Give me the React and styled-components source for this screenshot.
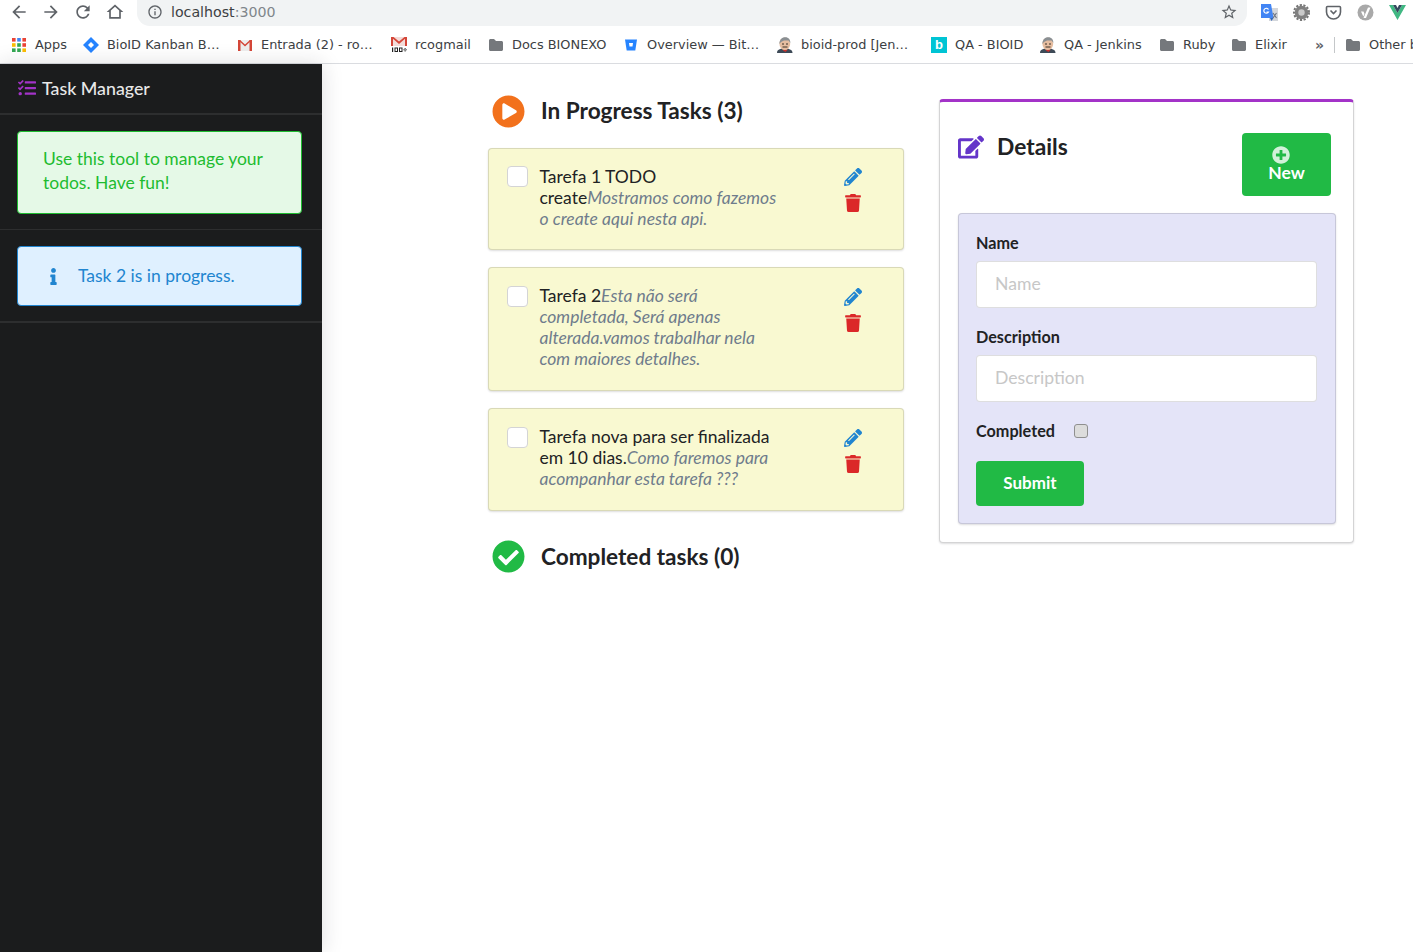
import React from 'react'
import styled, { createGlobalStyle } from 'styled-components'
import { FaTasks, FaPlayCircle, FaCheckCircle, FaPencilAlt, FaTrash, FaEdit, FaPlusCircle, FaInfo } from 'react-icons/fa'

const GlobalStyle = createGlobalStyle`
  html, body {
    margin: 0;
    padding: 0;
    background: #fff;
  }
  * {
    box-sizing: border-box;
  }
`;

const Page = styled.div`
  width: 1413px;
  height: 952px;
  overflow: hidden;
  display: flex;
  flex-direction: column;
  font-family: Lato, "Liberation Sans", sans-serif;
  color: #212224;
`;

const Toolbar = styled.div`
  height: 26px;
  flex: none;
  display: flex;
  padding-left: 3px;
`;

const NavButton = styled.div`
  width: 32px;
  height: 24px;
  display: flex;
  align-items: center;
  justify-content: center;
  svg {
    width: 20px;
    height: 20px;
    fill: #5f6368;
  }
`;

const Omnibox = styled.div`
  width: 1110px;
  margin-left: 6px;
  height: 26px;
  background: #f1f3f4;
  border-radius: 0 0 13px 13px;
  display: flex;
  align-items: center;
  padding: 0 8px 2px 10px;
  font: 14.2px "DejaVu Sans", sans-serif;
  color: #80868b;
  svg {
    width: 16px;
    height: 16px;
    fill: #5f6368;
  }
`;

const Host = styled.span`
  margin-left: 8px;
  color: #3c4043;
`;

const Star = styled.div`
  margin-left: auto;
  margin-right: 1px;
  display: flex;
  svg {
    width: 18px;
    height: 18px;
  }
`;

const Extensions = styled.div`
  margin-left: 6px;
  display: flex;
`;

const ExtButton = styled.div`
  width: 32px;
  height: 24px;
  display: flex;
  align-items: center;
  justify-content: center;
  svg {
    width: 17px;
    height: 17px;
  }
`;

const BookmarksBar = styled.div`
  height: 38px;
  flex: none;
  display: flex;
  align-items: center;
  padding: 0 0 0 11px;
  border-bottom: 1px solid #dadce0;
  font: 12.9px "DejaVu Sans", sans-serif;
  color: #3c4043;
  white-space: nowrap;
  overflow: hidden;
`;

const Bookmark = styled.div`
  flex: none;
  width: ${(p) => p.$width}px;
  display: flex;
  align-items: center;
  gap: 8px;
  svg {
    width: 16px;
    height: 16px;
    flex: none;
  }
`;

const Chevrons = styled.div`
  flex: none;
  width: 19px;
  margin-left: 14px;
  font-size: 14px;
  font-weight: 700;
  color: #5f6368;
`;

const BarDivider = styled.div`
  flex: none;
  width: 1px;
  height: 16px;
  background: #c4c7c9;
  margin-right: 10px;
`;

const Body = styled.div`
  flex: 1;
  display: flex;
  min-height: 0;
`;

const Sidebar = styled.aside`
  width: 322px;
  flex: none;
  background: #1b1c1d;
  box-shadow: 0 0 20px rgba(34, 36, 38, 0.15);
`;

const SidebarHeader = styled.div`
  height: 51px;
  display: flex;
  align-items: center;
  padding: 0 0 2px 18px;
  border-bottom: 2px solid #2d2e2f;
  font-size: 17.8px;
  font-weight: 500;
  color: #e8e8e8;
  svg {
    width: 18px;
    height: 18px;
    color: #a333c8;
    margin-right: 6px;
  }
`;

const SidebarItem = styled.div`
  padding: 16px 20px 15px 17px;
  border-bottom: ${(p) => (p.$thick ? 2 : 1)}px solid #2d2e2f;
`;

const Message = styled.div`
  width: 285px;
  border-radius: 4px;
  font-size: 17.5px;
  line-height: 24px;
  display: flex;
  align-items: center;
  background: ${(p) => (p.$tone === 'info' ? '#dff0ff' : '#e5f9e7')};
  color: ${(p) => (p.$tone === 'info' ? '#2185d0' : '#1ebc30')};
  border: 1px solid ${(p) => (p.$tone === 'info' ? '#2185d0' : '#1ebc30')};
  padding: ${(p) => (p.$tone === 'info' ? '17px 25px' : '15px 25px 18px')};
`;

const MessageIcon = styled(FaInfo)`
  width: 21px;
  height: 17px;
  margin-right: 14px;
  flex: none;
`;

const Content = styled.main`
  flex: 1;
  display: grid;
  grid-template-columns: 416px 415px;
  column-gap: 35px;
  align-items: start;
  padding: 35px 0 0 166px;
`;

const TaskColumn = styled.section`
  display: flex;
  flex-direction: column;
`;

const SectionTitle = styled.h2`
  margin: 0;
  display: flex;
  align-items: center;
  height: 24px;
  padding-left: 4px;
  font-size: 22.6px;
  font-weight: 700;
  line-height: 24px;
  svg {
    width: 33px;
    height: 33px;
    margin-right: 16px;
    color: ${(p) => p.$iconColor};
    flex: none;
  }
`;

const TaskList = styled.div`
  margin: 24.6px 0 33.800px;
  display: flex;
  flex-direction: column;
  gap: 17px;
`;

const TaskCard = styled.div`
  display: flex;
  align-items: flex-start;
  padding: 18px 18px 19.750px 18px;
  background: #f9f9d1;
  border: 1px solid rgba(34, 36, 38, 0.15);
  border-radius: 4px;
  box-shadow: 0 1px 2px rgba(34, 36, 38, 0.15);
`;

const TaskCheck = styled.div`
  width: 21px;
  height: 21px;
  margin-top: -0.5px;
  flex: none;
  background: #fff;
  border: 1px solid #d4d4d5;
  border-radius: 4px;
`;

const TaskText = styled.div`
  width: 242px;
  margin: -1px 0 1px 11.5px;
  font-size: 17.5px;
  line-height: 21px;
`;

const TaskNote = styled.em`
  color: #6f7c8c;
`;

const TaskActions = styled.div`
  margin-left: 62.5px;
  padding-top: 1.5px;
  display: flex;
  flex-direction: column;
  align-items: center;
  gap: 8px;
`;

const EditIcon = styled(FaPencilAlt)`
  width: 18px;
  height: 18px;
  color: #2185d0;
`;

const TrashIcon = styled(FaTrash)`
  width: 16px;
  height: 18px;
  color: #db2828;
`;

const DetailsPanel = styled.section`
  height: 444px;
  padding: 31px 17px 0 18px;
  background: #fff;
  border: 1px solid #d4d4d5;
  border-top: 3px solid #a333c8;
  border-radius: 4px;
  box-shadow: 0 1px 2px rgba(34, 36, 38, 0.15);
`;

const DetailsHeader = styled.div`
  display: flex;
  justify-content: space-between;
  padding-right: 5px;
`;

const DetailsTitle = styled.h2`
  margin: 1px 0 0;
  display: flex;
  align-items: flex-start;
  font-size: 22.8px;
  font-weight: 700;
  line-height: 24px;
  svg {
    width: 26px;
    height: 26px;
    margin-right: 13px;
    color: #6435c9;
  }
`;

const NewButton = styled.button`
  width: 89px;
  height: 63px;
  padding: 0 0 1px;
  display: flex;
  flex-direction: column;
  align-items: center;
  justify-content: center;
  border: none;
  border-radius: 4px;
  background: #21ba45;
  color: #fff;
  font: 700 17.5px/18px Lato, sans-serif;
  svg {
    width: 18px;
    height: 18px;
    margin-right: 12px;
    opacity: 0.8;
  }
`;

const TaskForm = styled.form`
  margin-top: 17px;
  width: 378px;
  height: 311px;
  padding: 20px 17px 0;
  background: #e4e4f8;
  border: 1px solid rgba(34, 36, 38, 0.15);
  border-radius: 4px;
  box-shadow: 0 1px 2px rgba(34, 36, 38, 0.15);
`;

const FieldLabel = styled.label`
  display: block;
  font-size: 16.2px;
  font-weight: 700;
  line-height: 18px;
`;

const TextInput = styled.input`
  display: block;
  width: 341px;
  height: 47px;
  margin: 9px 0 20px;
  padding: 0 18px 2px;
  background: #fff;
  border: 1px solid rgba(34, 36, 38, 0.15);
  border-radius: 4px;
  outline: none;
  font: 17.6px Lato, sans-serif;
  &::placeholder {
    color: #c7c7c7;
    opacity: 1;
  }
`;

const CompletedRow = styled.div`
  display: flex;
  align-items: center;
  gap: 19px;
  height: 18px;
`;

const NativeBox = styled.div`
  width: 14px;
  height: 14px;
  background: #dcdcdc;
  border: 1px solid #8f8f8f;
  border-radius: 3px;
`;

const SubmitButton = styled.button`
  display: block;
  width: 108px;
  height: 45px;
  margin-top: 21px;
  padding: 0 0 2px;
  border: none;
  border-radius: 4px;
  background: #21ba45;
  color: #fff;
  font: 700 17px Lato, sans-serif;
`;

const Mat = ({ d }) => (
  <svg viewBox="0 0 24 24">
    <path d={d} />
  </svg>
);

const Folder = () => (
  <svg viewBox="0 0 16 16">
    <path d="M1 3.500C1 2.700 1.700 2 2.500 2H6l2 2h5.500c.8 0 1.500.7 1.500 1.500v7c0 .8-.7 1.500-1.500 1.500h-11C1.700 14 1 13.300 1 12.500z" fill="#75787c" />
  </svg>
);

const AppsGrid = () => {
  const colors = ['#ea4335', '#4285f4', '#ea4335', '#fbbc04', '#34a853', '#ea4335', '#34a853', '#34a853', '#fbbc04']
  return (
    <svg viewBox="0 0 16 16">
      {colors.map((c, i) => (
        <rect key={i} x={1 + (i % 3) * 5.2} y={1 + Math.floor(i / 3) * 5.2} width="3.600" height="3.600" fill={c} />
      ))}
    </svg>
  )
};

const JiraIcon = () => (
  <svg viewBox="0 0 16 16">
    <path d="M8 0l8 8-8 8-8-8z" fill="#2684ff" />
    <path d="M8 5l3 3-3 3-3-3z" fill="#fff" />
  </svg>
);

const GmailIcon = () => (
  <svg viewBox="0 0 16 16">
    <path d="M1 3h14v11H1z" fill="#eee" />
    <path d="M1 3h2.500v11H1zM12.500 3H15v11h-2.500z" fill="#d44638" />
    <path d="M1 3h2l5 4.500L13 3h2L8 9.500z" fill="#d44638" />
  </svg>
);

const Gmail100Icon = () => (
  <svg viewBox="0 0 16 16">
    <path d="M0 0h16v9H0z" fill="#f3dcd9" />
    <path d="M0 0h2v9H0zM14 0h2v9h-2z" fill="#d44638" />
    <path d="M0 0h2.500L8 4.500 13.500 0H16L8 7z" fill="#d44638" />
    <path d="M1 10.500h1.200V15H1zM3.500 10.500h3.500V15H3.500zM4.500 11.500v2.500h1.500v-2.500zM8 10.500h3.500V15H8zM9 11.500v2.500h1.500v-2.500zM12.500 12.300h3.200v1h-3.200zM13.600 11h1v3.600h-1z" fill="#222" fillRule="evenodd" />
  </svg>
);

const BitbucketIcon = () => (
  <svg viewBox="0 0 16 16">
    <path d="M2 2.500h12L12.300 13.500H3.700z" fill="#2684ff" />
    <path d="M6 6h4l-.5 3.500h-3z" fill="#fff" />
  </svg>
);

const JenkinsIcon = () => (
  <svg viewBox="0 0 16 16">
    <path d="M0 16c0-3 2-4.500 7.500-4.500S15.500 13 15.500 16z" fill="#3d4a57" />
    <path d="M6.500 11.500h2.500l1.500 1.500-2 2-2.500-1.500z" fill="#c8322d" />
    <ellipse cx="7.800" cy="6.800" rx="5.400" ry="6.300" fill="#e6bda0" />
    <path d="M2.400 7C2.400 2 5.500 .2 8.500 .2S13.400 2.500 13.400 6L11.500 3.500H7L4 5z" fill="#8a8f93" />
    <path d="M5 7h2M9 7h2M5.500 10h5" stroke="#3b3027" strokeWidth="1" />
  </svg>
);

const BrandB = styled.div`
  width: 16px;
  height: 16px;
  flex: none;
  background: #00c4d4;
  color: #fff;
  font: 700 13px/16px "Liberation Sans", sans-serif;
  text-align: center;
`;

const bookmarks = [
  { label: 'Apps', width: 72, icon: <AppsGrid /> },
  { label: 'BioID Kanban B…', width: 154, icon: <JiraIcon /> },
  { label: 'Entrada (2) - ro…', width: 154, icon: <GmailIcon /> },
  { label: 'rcogmail', width: 97, icon: <Gmail100Icon /> },
  { label: 'Docs BIONEXO', width: 135, icon: <Folder /> },
  { label: 'Overview — Bit…', width: 154, icon: <BitbucketIcon /> },
  { label: 'bioid-prod [Jen…', width: 154, icon: <JenkinsIcon /> },
  { label: 'QA - BIOID', width: 109, icon: <BrandB>b</BrandB> },
  { label: 'QA - Jenkins', width: 119, icon: <JenkinsIcon /> },
  { label: 'Ruby', width: 72, icon: <Folder /> },
  { label: 'Elixir', width: 70, icon: <Folder /> },
]

const tasks = [
  { id: 1, name: 'Tarefa 1 TODO create', note: 'Mostramos como fazemos o create aqui nesta api.' },
  { id: 2, name: 'Tarefa 2', note: 'Esta não será completada, Será apenas alterada.vamos trabalhar nela com maiores detalhes.' },
  { id: 3, name: 'Tarefa nova para ser finalizada em 10 dias.', note: 'Como faremos para acompanhar esta tarefa ???' },
]

const BrowserChrome = () => (
  <>
    <Toolbar>
      <NavButton><Mat d="M20 11H7.830l5.590-5.590L12 4l-8 8 8 8 1.410-1.410L7.830 13H20v-2z" /></NavButton>
      <NavButton><Mat d="M4 11h12.170l-5.590-5.590L12 4l8 8-8 8-1.410-1.410L16.170 13H4v-2z" /></NavButton>
      <NavButton><Mat d="M17.650 6.350C16.200 4.900 14.210 4 12 4c-4.420 0-7.990 3.580-7.990 8s3.570 8 7.990 8c3.730 0 6.840-2.550 7.730-6h-2.080c-.82 2.330-3.040 4-5.650 4-3.310 0-6-2.690-6-6s2.690-6 6-6c1.660 0 3.140.69 4.220 1.780L13 11h7V4l-2.350 2.350z" /></NavButton>
      <NavButton><Mat d="M12 5.690l5 4.500V18H7v-7.810l5-4.500M12 3L2 12h3v8h14v-8h3L12 3z" /></NavButton>
      <Omnibox>
        <Mat d="M11 7h2v2h-2zm0 4h2v6h-2zm1-9C6.480 2 2 6.480 2 12s4.480 10 10 10 10-4.480 10-10S17.520 2 12 2zm0 18c-4.410 0-8-3.590-8-8s3.590-8 8-8 8 3.590 8 8-3.590 8-8 8z" />
        <Host>localhost</Host>:3000
        <Star>
          <Mat d="M22 9.240l-7.190-.62L12 2 9.190 8.630 2 9.240l5.460 4.730L5.820 21 12 17.270 18.180 21l-1.630-7.030L22 9.240zM12 15.400l-3.760 2.270 1-4.280-3.320-2.880 4.380-.38L12 6.100l1.710 4.040 4.380.38-3.320 2.880 1 4.280L12 15.400z" />
        </Star>
      </Omnibox>
      <Extensions>
        <ExtButton>
          <svg viewBox="0 0 17 17">
            <path d="M8 4h9v13H8z" fill="#d3d6db" />
            <path d="M0 0h10l2.500 14H0z" fill="#4285f4" />
            <path d="M9 14h3.500l-2 3z" fill="#3367b8" />
            <path d="M7.500 5.500a2.500 2.500 0 1 0 0 2.500H5.500" fill="none" stroke="#fff" strokeWidth="1.200" />
            <path d="M12 9l3.500 5M15.500 9L12 14" stroke="#6b7280" strokeWidth="1.100" />
          </svg>
        </ExtButton>
        <ExtButton>
          <svg viewBox="0 0 17 17">
            <circle cx="8.500" cy="8.500" r="6.800" fill="#808080" />
            <circle cx="8.500" cy="8.500" r="7.500" fill="none" stroke="#777" strokeWidth="2" strokeDasharray="2.200 1.500" />
            <circle cx="8.500" cy="8.500" r="3.200" fill="#c9c9c9" />
          </svg>
        </ExtButton>
        <ExtButton>
          <svg viewBox="0 0 17 17">
            <path d="M2.500 2.500h12c.6 0 1 .4 1 1v4.500a7 7 0 0 1-14 0V3.500c0-.6.4-1 1-1z" fill="none" stroke="#5f6368" strokeWidth="1.600" />
            <path d="M5.500 6.500l3 3 3-3" fill="none" stroke="#5f6368" strokeWidth="1.600" />
          </svg>
        </ExtButton>
        <ExtButton>
          <svg viewBox="0 0 17 17">
            <circle cx="8.500" cy="8.500" r="8" fill="#a9a9a9" />
            <path d="M6.500 14L11 3.500h2.500L9 14zM4 7.500h2.500L7.500 10 6.300 12.500z" fill="#fff" />
          </svg>
        </ExtButton>
        <ExtButton>
          <svg viewBox="0 0 17 17">
            <path d="M0 1h4l4.500 8L13 1h4L8.500 16z" fill="#41b883" />
            <path d="M4 1h3l1.500 3L10 1h3L8.500 9z" fill="#35495e" />
          </svg>
        </ExtButton>
      </Extensions>
    </Toolbar>
    <BookmarksBar>
      {bookmarks.map((b) => (
        <Bookmark key={b.label} $width={b.width}>
          {b.icon}
          {b.label}
        </Bookmark>
      ))}
      <Chevrons>»</Chevrons>
      <BarDivider />
      <Bookmark $width={100}>
        <Folder />
        Other bookmarks
      </Bookmark>
    </BookmarksBar>
  </>
)

const App = () => {
  return (
    <Page>
      <GlobalStyle />
      <BrowserChrome />
      <Body>
        <Sidebar>
          <SidebarHeader>
            <FaTasks />
            Task Manager
          </SidebarHeader>
          <SidebarItem>
            <Message>Use this tool to manage your todos. Have fun!</Message>
          </SidebarItem>
          <SidebarItem $thick>
            <Message $tone="info">
              <MessageIcon />
              Task 2 is in progress.
            </Message>
          </SidebarItem>
        </Sidebar>
        <Content>
          <TaskColumn>
            <SectionTitle $iconColor="#f2711c">
              <FaPlayCircle />
              In Progress Tasks (3)
            </SectionTitle>
            <TaskList>
              {tasks.map((t) => (
                <TaskCard key={t.id}>
                  <TaskCheck />
                  <TaskText>
                    {t.name}
                    <TaskNote>{t.note}</TaskNote>
                  </TaskText>
                  <TaskActions>
                    <EditIcon />
                    <TrashIcon />
                  </TaskActions>
                </TaskCard>
              ))}
            </TaskList>
            <SectionTitle $iconColor="#21ba45">
              <FaCheckCircle />
              Completed tasks (0)
            </SectionTitle>
          </TaskColumn>
          <DetailsPanel>
            <DetailsHeader>
              <DetailsTitle>
                <FaEdit />
                Details
              </DetailsTitle>
              <NewButton type="button">
                <FaPlusCircle />
                New
              </NewButton>
            </DetailsHeader>
            <TaskForm>
              <FieldLabel>Name</FieldLabel>
              <TextInput placeholder="Name" />
              <FieldLabel>Description</FieldLabel>
              <TextInput placeholder="Description" />
              <CompletedRow>
                <FieldLabel>Completed</FieldLabel>
                <NativeBox />
              </CompletedRow>
              <SubmitButton type="button">Submit</SubmitButton>
            </TaskForm>
          </DetailsPanel>
        </Content>
      </Body>
    </Page>
  )
}

export default App
